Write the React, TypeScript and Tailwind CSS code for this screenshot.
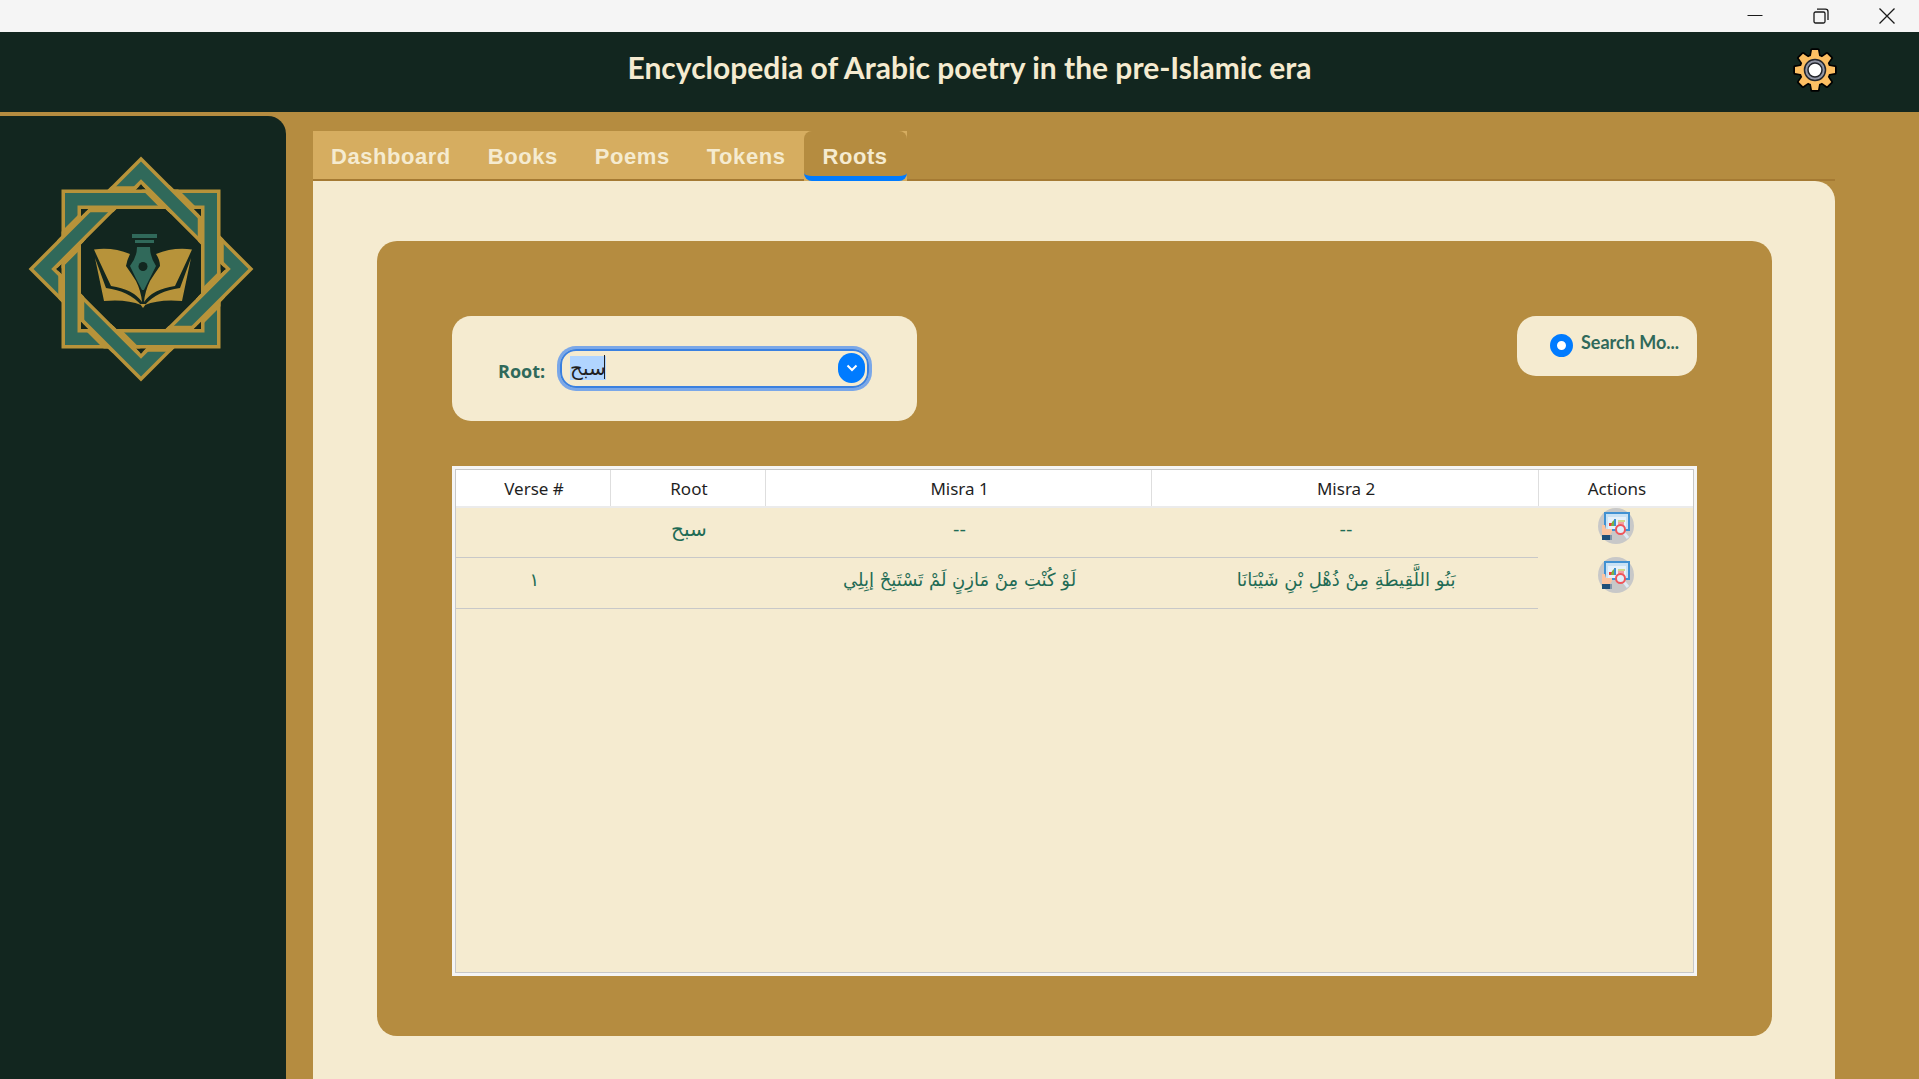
import { useEffect, useRef } from "react";

const tabs = ["Dashboard", "Books", "Poems", "Tokens", "Roots"];

const columns = ["Verse #", "Root", "Misra 1", "Misra 2", "Actions"];

const rows = [
  { verse: "", root: "سبح", first: "--", second: "--" },
  {
    verse: "١",
    root: "",
    first: "لَوْ كُنْتِ مِنْ مَازِنٍ لَمْ تَسْتَبِحْ إبِلِي",
    second: "بَنُو اللَّقِيطَةِ مِنْ ذُهْلِ بْنِ شَيْبَانَا",
  },
];

const GOLD = "#b7933a";
const TEAL = "#30695a";
const DARK = "#12261f";

/* One square band of the interlaced star: two gold rims round a teal strip. */
function Band() {
  return (
    <g fill="none">
      <rect x="-69.75" y="-69.75" width="139.5" height="139.5" stroke={GOLD} strokeWidth="19.5" />
      <rect x="-69.75" y="-69.75" width="139.5" height="139.5" stroke={TEAL} strokeWidth="12.5" />
    </g>
  );
}

function WideBand() {
  return <rect x="-69.75" y="-69.75" width="139.5" height="139.5" fill="none" stroke={GOLD} strokeWidth="26" />;
}

function Logo() {
  return (
    <svg viewBox="-114 -114 228 228" className="h-57 w-57" role="img" aria-label="Star with a book and a pen">
      <defs>
        <clipPath id="diamondBand">
          <path clipRule="evenodd" d="M0-112.5 112.5 0 0 112.5-112.5 0ZM0-84.5-84.5 0 0 84.5 84.5 0Z" />
        </clipPath>
        <clipPath id="crossBand">
          <path d="M0-79.5H60V-60H0ZM79.5 0V60H60V0ZM0 79.5H-60V60H0ZM-79.5 0V-60H-60V0Z" />
        </clipPath>
        <clipPath id="crossArea">
          <path d="M0-84H60V-55H0ZM84 0V60H55V0ZM0 84H-60V55H0ZM-84 0V-60H-55V0Z" />
        </clipPath>
      </defs>
      <g transform="rotate(45)">
        <Band />
      </g>
      <g clipPath="url(#diamondBand)">
        <WideBand />
      </g>
      <Band />
      <g clipPath="url(#crossBand)">
        <g transform="rotate(45)">
          <WideBand />
        </g>
      </g>
      <g clipPath="url(#crossArea)">
        <g transform="rotate(45)">
          <Band />
        </g>
      </g>
      <g fill={GOLD}>
        <path d="M-47-19.5Q-28-22-11-15Q-14-9-15-3Q-10 4-5 12Q0 22 1 33Q-8 20-30 17Q-40-4-47-19.5Z" />
        <path d="M51-19.5Q32-22 15-15Q19-9 19-3Q14 4 9 12Q4 22 3 33Q12 20 34 17Q44-4 51-19.5Z" />
        <path d="M-46-11L-35 19Q-12 22 0 36Q-14 30-37 32Z" />
        <path d="M50-11L39 19Q16 22 4 36Q18 30 41 32Z" />
        <path d="M-1 35 2 39 5 35Z" />
      </g>
      <g fill={TEAL}>
        <path d="M-9-35H16V-31H-9ZM-6-29H13V-26H-6Z" />
        <path d="M-4-22H9Q9-12 15-3Q9 9 3 21H1Q-6 8-11-3Q-4-12-4-22Z" />
      </g>
      <circle cx="2" cy="-2.500" r="4.500" fill={DARK} />
    </svg>
  );
}

function GearIcon() {
  const angles = [0, 45, 90, 135, 180, 225, 270, 315];
  return (
    <svg viewBox="-22 -22 44 44" className="size-11" aria-hidden="true">
      <g fill="#000" stroke="#000" strokeWidth="3.500" strokeLinejoin="round">
        {angles.map((a) => (
          <path key={a} d="M-3-20H3L4-12H-4Z" transform={`rotate(${a})`} />
        ))}
        <circle r="14.500" />
      </g>
      <g fill="#fdbf63">
        {angles.map((a) => (
          <path key={a} d="M-3-20H3L4.500-12H-4.500Z" transform={`rotate(${a})`} />
        ))}
        <circle r="14.500" />
      </g>
      <circle r="10.500" fill="#9296a6" stroke="#22242b" strokeWidth="1.500" />
      <circle r="7" fill="#fff" stroke="#22242b" strokeWidth="1.500" />
    </svg>
  );
}

function InspectIcon() {
  return (
    <svg viewBox="0 0 36 36" className="size-9" aria-hidden="true">
      <circle cx="18" cy="18" r="18" fill="#c8c8c8" />
      <rect x="6" y="4" width="26" height="19" fill="#4191d2" />
      <rect x="8" y="6" width="22" height="15" fill="#c9e2f5" />
      <rect x="10" y="9" width="18" height="12" fill="#e6f1fa" />
      <path d="M11 15h4v3h-4z" fill="#ef4136" />
      <path d="M14 14l2-2v6h-3z" fill="#7cb342" />
      <path d="M16 11h2v7h-2z" fill="#3f8fce" />
      <path d="M20 12h7v2h-7z" fill="#cfd98a" />
      <path d="M20 14h6v3h-6z" fill="#f3a0a0" />
      <path d="M4 17h3l1 4h6v3l-2 3H4z" fill="#fdc4a0" />
      <path d="M4 27h8v5H4z" fill="#1f4e79" />
      <path d="M12 27h2v5h-2z" fill="#8296ab" />
      <path d="M26 25l4 5" stroke="#dfeaf5" strokeWidth="3" />
      <circle cx="22.500" cy="21.500" r="4.500" fill="#dff0fb" stroke="#f0555a" strokeWidth="2" />
    </svg>
  );
}

function TitleBar() {
  return (
    <div className="flex h-8 shrink-0 items-center justify-end bg-[#f5f5f5] text-[#1a1a1a]">
      <button aria-label="Minimize" className="flex h-8 w-16 items-center justify-center">
        <svg viewBox="0 0 16 16" className="size-4" fill="none" stroke="currentColor">
          <path d="M0.500 7.500h15" />
        </svg>
      </button>
      <button aria-label="Restore" className="flex h-8 w-17 items-center justify-center">
        <svg viewBox="0 0 16 16" className="size-4" fill="none" stroke="currentColor" strokeWidth="1.300">
          <rect x="1" y="4" width="11" height="11" rx="1.500" />
          <path d="M4 1.200h8.500a2.500 2.500 0 0 1 2.500 2.500V12" />
        </svg>
      </button>
      <button aria-label="Close" className="flex h-8 w-16 items-center justify-center">
        <svg viewBox="0 0 16 16" className="size-4" fill="none" stroke="currentColor" strokeWidth="1.300">
          <path d="M0.500 0.500l15 15M15.500 0.500l-15 15" />
        </svg>
      </button>
    </div>
  );
}

function Header() {
  return (
    <header className="relative flex h-20 shrink-0 items-center justify-center bg-[#12261f] pb-2.5">
      <h1 className="pl-5 font-['Lato',sans-serif] text-3xl font-bold text-[#f5ebd0]">
        Encyclopedia of Arabic poetry in the pre-Islamic era
      </h1>
      <button aria-label="Settings" className="absolute top-4 right-[82px]">
        <GearIcon />
      </button>
    </header>
  );
}

function TabBar() {
  return (
    <div
      role="tablist"
      className="flex h-[50px] shrink-0 border-b-2 border-[#a1762f]/80 font-['Liberation_Sans',sans-serif] text-[22px] font-bold tracking-wide text-[#f5ebd0]"
    >
      {tabs.map((tab) =>
        tab === "Roots" ? (
          <div key={tab} className="-mb-0.5 bg-[#d6ad60]">
            <button
              role="tab"
              aria-selected="true"
              className="h-[50px] rounded-lg border-b-5 border-[#007bff] bg-[#b58c40] pt-1.5 pr-[19px] pl-[18px]"
            >
              {tab}
            </button>
          </div>
        ) : (
          <button key={tab} role="tab" aria-selected="false" className="bg-[#d6ad60] pt-0.5 pr-[19px] pl-[18px]">
            {tab}
          </button>
        ),
      )}
    </div>
  );
}

function RootPicker() {
  const input = useRef<HTMLInputElement>(null);
  useEffect(() => {
    input.current?.focus();
    input.current?.select();
  }, []);
  return (
    <div className="flex h-[105px] w-[465px] items-center rounded-[19px] bg-[#f5ebd0] pl-[46px]">
      <label htmlFor="root" className="w-[62px] pt-1 font-['Open_Sans',sans-serif] text-lg font-bold text-[#30695a]">
        Root:
      </label>
      <div className="relative flex h-[39px] w-[309px] items-center rounded-[16px] border-2 border-[#3a80e0] pr-0.5 pb-0.5 pl-2 ring-3 ring-[#7aa7e8]">
        <input
          id="root"
          ref={input}
          defaultValue="سبح"
          className="min-w-0 flex-1 font-['DejaVu_Sans',sans-serif] text-xl leading-6 text-[#1f1f1f] outline-none selection:bg-[#b1d5ff] selection:text-[#1f1f1f]"
        />
        <span className="absolute top-1 left-[42px] h-6 w-px bg-[#1f1f1f]" />
        <button
          aria-label="Show roots"
          className="flex h-[30px] w-[27px] items-center justify-center rounded-full bg-[#007bff]"
        >
          <svg viewBox="0 0 12 12" className="size-3" fill="none" stroke="#fff" strokeWidth="2">
            <path d="M1.500 3.500 6 8l4.500-4.500" />
          </svg>
        </button>
      </div>
    </div>
  );
}

function SearchMode() {
  return (
    <label className="flex h-[60px] w-[180px] items-center gap-2 rounded-[19px] bg-[#f5ebd0] pb-2 pl-[33px] font-['Lato',sans-serif] text-lg font-bold text-[#30695a]">
      <input
        type="radio"
        defaultChecked
        className="mt-1.5 size-[23px] shrink-0 appearance-none rounded-full border-7 border-[#007bff] bg-white"
      />
      <span className="whitespace-nowrap">Search Mo...</span>
    </label>
  );
}

function RootsTable() {
  return (
    <div className="min-h-0 flex-1 border-3 border-[#f5f5f5]">
      <div className="h-full border border-[#c8c8c8] bg-[#f5ebd0]">
        <table className="w-full table-fixed border-collapse text-center">
          <colgroup>
            <col className="w-[12.5%]" />
            <col className="w-[12.5%]" />
            <col className="w-[31.25%]" />
            <col className="w-[31.25%]" />
            <col className="w-[12.5%]" />
          </colgroup>
          <thead className="bg-white font-['Noto_Sans',sans-serif] text-[17px] text-[#1f1f1f]">
            <tr className="h-[37px] border-b-2 border-[#ebebeb]">
              {columns.map((column) => (
                <th key={column} className="border-r border-[#dedede] p-0 pt-0.5 pl-0.5 font-normal last:border-r-0">
                  {column}
                </th>
              ))}
            </tr>
          </thead>
          <tbody className="font-['DejaVu_Sans',sans-serif] text-lg text-[#1f6b55]">
            {rows.map((row, i) => (
              <tr key={i} className="h-[51px] first:h-[50px]">
                <td className="border-b border-[#c8c8c8] p-0 pb-1.5 pl-0.5">{row.verse}</td>
                <td className="border-b border-[#c8c8c8] p-0 pb-1.5 pl-0.5 text-xl">{row.root}</td>
                <td className="border-b border-[#c8c8c8] p-0 pb-1.5 pl-0.5">{row.first}</td>
                <td className="border-b border-[#c8c8c8] p-0 pb-1.5 pl-0.5">{row.second}</td>
                <td className="p-0 align-top">
                  <button aria-label="Inspect verse" className="block w-full">
                    <span className="flex justify-center">
                      <InspectIcon />
                    </span>
                  </button>
                </td>
              </tr>
            ))}
          </tbody>
        </table>
      </div>
    </div>
  );
}

export default function App() {
  return (
    <div className="flex h-screen flex-col overflow-hidden bg-[#b58c40]">
      <TitleBar />
      <Header />
      <div className="flex min-h-0 flex-1">
        <aside className="mt-1 w-[286px] shrink-0 rounded-tr-[18px] bg-[#12261f] pt-[39px] pl-[27px]">
          <Logo />
        </aside>
        <main className="mt-[19px] mr-[84px] ml-[27px] flex min-w-0 flex-1 flex-col">
          <TabBar />
          <section className="flex min-h-0 flex-1 flex-col rounded-tr-[20px] bg-[#f5ebd0] pt-[60px] pr-[63px] pb-[43px] pl-16">
            <div className="flex min-h-0 flex-1 flex-col gap-[45px] rounded-[20px] bg-[#b58c40] px-[75px] pt-[75px] pb-[60px]">
              <div className="flex items-start justify-between">
                <RootPicker />
                <SearchMode />
              </div>
              <RootsTable />
            </div>
          </section>
        </main>
      </div>
    </div>
  );
}
